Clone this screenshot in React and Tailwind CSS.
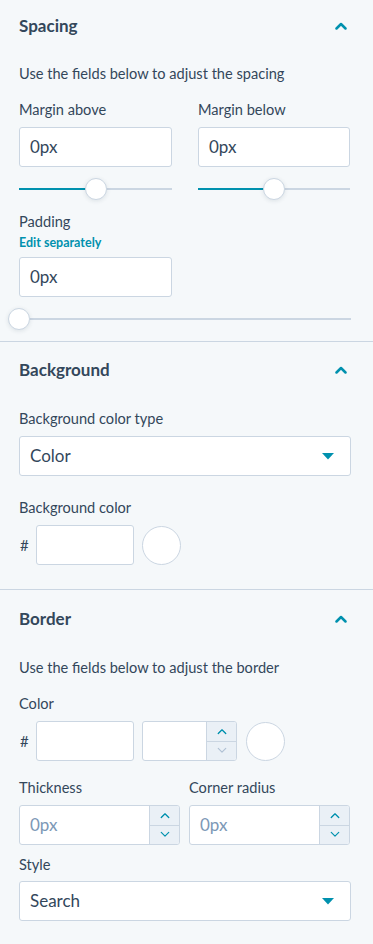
import React from "react";

const font = { fontFamily: "Lato, 'Open Sans', sans-serif" };

function Chevron({ color = "#0091ae", w = 12, h = 8, sw = 2.5, down = false }) {
  return (
    <svg width={w} height={h} viewBox="0 0 12 8" fill="none">
      <polyline
        points={down ? "1.5,1.5 6,6 10.5,1.5" : "1.5,6.5 6,2 10.5,6.5"}
        stroke={color}
        strokeWidth={sw}
        strokeLinecap="round"
        strokeLinejoin="round"
      />
    </svg>
  );
}

function Caret() {
  return (
    <svg width="12" height="7" viewBox="0 0 12 7">
      <polygon points="0,0 12,0 6,6.5" fill="#0091ae" />
    </svg>
  );
}

function Header({ title }) {
  return (
    <div className="flex h-6 items-center justify-between">
      <span className="text-[17px] font-bold text-[#33475b]">{title}</span>
      <span className="mr-[4px] flex items-center">
        <Chevron />
      </span>
    </div>
  );
}

function Label({ children, className = "" }) {
  return <div className={"h-5 text-[14.6px] leading-5 text-[#33475b] " + className}>{children}</div>;
}

function TextInput({ value, className = "" }) {
  return (
    <div className={"flex h-10 items-center rounded-[3px] border border-[#cbd6e2] bg-white px-[10px] text-[17px] text-[#33475b] " + className}>
      {value}
    </div>
  );
}

function Slider({ pct, className = "" }) {
  return (
    <div className={"relative h-[22px] " + className}>
      <div className="absolute left-0 right-0 top-[10px] h-[2px] bg-[#cbd6e2]" />
      <div className="absolute left-0 top-[10px] h-[2px] bg-[#0091ae]" style={{ width: `${pct}%` }} />
      <div
        className="absolute top-0 h-[22px] w-[22px] -translate-x-1/2 rounded-full border border-[#cbd6e2] bg-white shadow-[0_1px_4px_rgba(45,62,80,0.12)]"
        style={{ left: `${pct}%` }}
      />
    </div>
  );
}

function StepButtons({ downColor = "#0091ae" }) {
  return (
    <div className="flex w-[30px] flex-col border-l border-[#cbd6e2] bg-[#eaf0f6]">
      <div className="flex flex-1 items-center justify-center border-b border-[#cbd6e2]">
        <Chevron w={10} h={7} sw={1.6} />
      </div>
      <div className="flex flex-1 items-center justify-center">
        <Chevron w={10} h={7} sw={1.4} color={downColor} down />
      </div>
    </div>
  );
}

function NumberInput({ value, className = "" }) {
  return (
    <div className={"flex h-10 overflow-hidden rounded-[3px] border border-[#cbd6e2] bg-white " + className}>
      <div className="flex flex-1 items-center px-[10px] text-[17px] text-[#7c98b6]">{value}</div>
      <StepButtons />
    </div>
  );
}

function Select({ value }) {
  return (
    <div className="flex h-10 items-center justify-between rounded-[3px] border border-[#cbd6e2] bg-white pl-[10px] pr-[16px] text-[17px] text-[#33475b]">
      <span>{value}</span>
      <Caret />
    </div>
  );
}

function Swatch() {
  return <div className="h-[39px] w-[39px] rounded-full border border-[#cbd6e2] bg-white" />;
}

export default function App() {
  return (
    <div className="min-h-[944px] w-[373px] bg-[#f5f8fa] text-[#33475b]" style={font}>
      {/* Spacing */}
      <section className="border-b border-[#cbd6e2] pb-[11px] pl-[19px] pr-[22px] pt-[14px]">
        <Header title="Spacing" />
        <Label className="mt-[26px]">Use the fields below to adjust the spacing</Label>
        <div className="mt-[16px] grid grid-cols-[153px_152px] gap-x-[26px]">
          <div>
            <Label>Margin above</Label>
            <TextInput value="0px" className="mt-[7px]" />
            <Slider pct={50} className="mt-[11px]" />
          </div>
          <div>
            <Label>Margin below</Label>
            <TextInput value="0px" className="mt-[7px]" />
            <Slider pct={50} className="mt-[11px]" />
          </div>
        </div>
        <Label className="mt-[12px]">Padding</Label>
        <div className="mt-[3px] h-4 text-[12.5px] font-bold leading-4 text-[#0091ae]">Edit separately</div>
        <TextInput value="0px" className="mt-[6px] w-[153px]" />
        <Slider pct={0} className="mt-[11px]" />
      </section>

      {/* Background */}
      <section className="border-b border-[#cbd6e2] pb-[24px] pl-[19px] pr-[22px] pt-[16px]">
        <Header title="Background" />
        <Label className="mt-[27px]">Background color type</Label>
        <div className="mt-[7px]">
          <Select value="Color" />
        </div>
        <Label className="mt-[22px]">Background color</Label>
        <div className="mt-[7px] flex items-center">
          <span className="w-[17px] pl-[1px] text-[15px]">#</span>
          <div className="h-10 w-[98px] rounded-[3px] border border-[#cbd6e2] bg-white" />
          <div className="ml-[8px]">
            <Swatch />
          </div>
        </div>
      </section>

      {/* Border */}
      <section className="pb-[24px] pl-[19px] pr-[22px] pt-[17px]">
        <Header title="Border" />
        <Label className="mt-[27px]">Use the fields below to adjust the border</Label>
        <Label className="mt-[16px]">Color</Label>
        <div className="mt-[7px] flex items-center">
          <span className="w-[17px] pl-[1px] text-[15px]">#</span>
          <div className="h-10 w-[98px] rounded-[3px] border border-[#cbd6e2] bg-white" />
          <div className="ml-[8px] flex h-10 w-[95px] overflow-hidden rounded-[3px] border border-[#cbd6e2] bg-white">
            <div className="flex-1" />
            <StepButtons downColor="#b0c1d4" />
          </div>
          <div className="ml-[9px]">
            <Swatch />
          </div>
        </div>
        <div className="mt-[17px] grid grid-cols-[161px_161px] gap-x-[9px]">
          <div>
            <Label>Thickness</Label>
            <NumberInput value="0px" className="mt-[7px]" />
          </div>
          <div>
            <Label>Corner radius</Label>
            <NumberInput value="0px" className="mt-[7px]" />
          </div>
        </div>
        <Label className="mt-[10px]">Style</Label>
        <div className="mt-[6px]">
          <Select value="Search" />
        </div>
      </section>
    </div>
  );
}
